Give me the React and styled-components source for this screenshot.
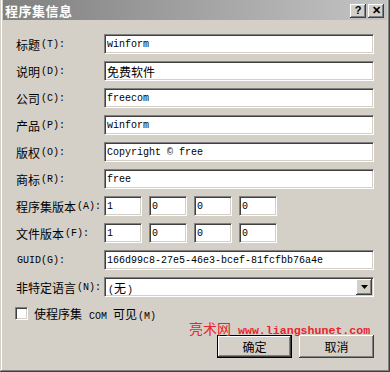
import React from "react";
import styled, { createGlobalStyle } from "styled-components";

const GlobalStyle = createGlobalStyle`
  html, body {
    margin: 0;
    padding: 0;
    background: #d4d0c8;
  }
  * {
    box-sizing: border-box;
  }
`;

const fields = [
  { label: "标题", key: "(T):", value: "winform" },
  { label: "说明", key: "(D):", value: "免费软件", cjk: true },
  { label: "公司", key: "(C):", value: "freecom" },
  { label: "产品", key: "(P):", value: "winform" },
  { label: "版权", key: "(O):", value: "Copyright © free" },
  { label: "商标", key: "(R):", value: "free" },
];

const App = () => {
  return (
    <Window>
      <GlobalStyle />
      <TitleBar>
        <TitleText>程序集信息</TitleText>
        <TitleButtons>
          <CaptionButton>?</CaptionButton>
          <CaptionButton>✕</CaptionButton>
        </TitleButtons>
      </TitleBar>

      <Form>
        {fields.map((f) => (
          <React.Fragment key={f.label}>
            <Label>
              {f.label}
              <Key>{f.key}</Key>
            </Label>
            <Field cjk={f.cjk}>{f.value}</Field>
          </React.Fragment>
        ))}

        <Label>
          程序集版本<Key>(A):</Key>
        </Label>
        <VersionRow>
          <SmallField>1</SmallField>
          <SmallField>0</SmallField>
          <SmallField>0</SmallField>
          <SmallField>0</SmallField>
        </VersionRow>

        <Label>
          文件版本<Key>(F):</Key>
        </Label>
        <VersionRow>
          <SmallField>1</SmallField>
          <SmallField>0</SmallField>
          <SmallField>0</SmallField>
          <SmallField>0</SmallField>
        </VersionRow>

        <Label>
          <Key>GUID(G):</Key>
        </Label>
        <Field>166d99c8-27e5-46e3-bcef-81fcfbb76a4e</Field>

        <Label>
          非特定语言<Key>(N):</Key>
        </Label>
        <Combo>
          <ComboText>
            <Key>(</Key>无<Key>)</Key>
          </ComboText>
          <ArrowButton>
            <svg width="7" height="4" viewBox="0 0 7 4">
              <path d="M0 0h7L3.5 4z" fill="#000" />
            </svg>
          </ArrowButton>
        </Combo>
      </Form>

      <CheckRow>
        <CheckBox />
        <CheckLabel>
          使程序集<Key> COM </Key>可见<Key>(M)</Key>
        </CheckLabel>
      </CheckRow>

      <ButtonRow>
        <Button isDefault>确定</Button>
        <Button>取消</Button>
      </ButtonRow>

      <Watermark>
        亮术网<WatermarkUrl>www.liangshunet.com</WatermarkUrl>
      </Watermark>
    </Window>
  );
};

export default App;

const Window = styled.div`
  position: relative;
  width: 390px;
  height: 372px;
  padding: 0 3px 3px 3px;
  background: #d4d0c8;
  box-shadow: inset -1px -1px #404040, inset 1px 0 #d4d0c8,
    inset -2px -2px #808080, inset 2px 0 #ffffff;
  font-family: "Noto Sans CJK SC", "Liberation Sans", sans-serif;
  font-size: 12px;
  color: #000;
`;

const TitleBar = styled.div`
  height: 20px;
  display: flex;
  align-items: center;
  justify-content: space-between;
  padding: 0 3px 0 2px;
  background: linear-gradient(to right, #808080, #c4c4c4);
`;

const TitleText = styled.div`
  color: #fff;
  font-weight: bold;
  font-size: 13px;
  letter-spacing: 0.5px;
`;

const TitleButtons = styled.div`
  display: flex;
  gap: 2px;
  margin-top: 1px;
`;

const CaptionButton = styled.div`
  width: 16px;
  height: 14px;
  display: flex;
  align-items: center;
  justify-content: center;
  background: #d4d0c8;
  box-shadow: inset -1px -1px #404040, inset 1px 1px #ffffff,
    inset -2px -2px #808080;
  font-family: "Liberation Sans", sans-serif;
  font-weight: bold;
  font-size: 11px;
  line-height: 1;
`;

const Form = styled.div`
  display: grid;
  grid-template-columns: 88px 270px;
  grid-auto-rows: 20px;
  row-gap: 7px;
  margin: 14px 0 0 13px;
`;

const Label = styled.div`
  display: flex;
  align-items: center;
  white-space: nowrap;
  font-size: 12px;
`;

const Key = styled.span`
  font-family: "Liberation Mono", monospace;
  font-size: 10px;
  white-space: pre;
  margin-left: 1px;
`;

const sunken = `
  background: #fff;
  border: 1px solid;
  border-color: #808080 #ffffff #ffffff #808080;
  box-shadow: inset 1px 1px #404040, inset -1px -1px #d4d0c8;
`;

const Field = styled.div`
  ${sunken}
  display: flex;
  align-items: center;
  padding-left: 2px;
  white-space: nowrap;
  font-family: ${(p) =>
    p.cjk ? `"Noto Sans CJK SC", sans-serif` : `"Liberation Mono", monospace`};
  font-size: ${(p) => (p.cjk ? "12px" : "10px")};
`;

const VersionRow = styled.div`
  display: flex;
  gap: 7px;
`;

const SmallField = styled(Field)`
  width: 38px;
`;

const Combo = styled.div`
  ${sunken}
  display: flex;
  align-items: center;
  justify-content: space-between;
  padding: 0 1px 0 2px;
`;

const ComboText = styled.div`
  font-size: 12px;
`;

const ArrowButton = styled.div`
  width: 16px;
  height: 16px;
  display: flex;
  align-items: center;
  justify-content: center;
  background: #d4d0c8;
  box-shadow: inset -1px -1px #404040, inset 1px 1px #ffffff,
    inset -2px -2px #808080;
`;

const CheckRow = styled.div`
  display: flex;
  align-items: center;
  gap: 6px;
  margin: 10px 0 0 12px;
  height: 13px;
`;

const CheckBox = styled.div`
  width: 13px;
  height: 13px;
  ${sunken}
`;

const CheckLabel = styled.div`
  font-size: 12px;
  white-space: nowrap;
`;

const ButtonRow = styled.div`
  display: flex;
  justify-content: flex-end;
  gap: 7px;
  margin: 15px 13px 0 0;
`;

const Button = styled.div`
  width: 75px;
  height: 23px;
  display: flex;
  align-items: center;
  justify-content: center;
  background: #d4d0c8;
  font-size: 12px;
  box-shadow: ${(p) =>
    p.isDefault
      ? "inset 0 0 0 1px #000, inset -2px -2px #404040, inset 2px 2px #ffffff, inset -3px -3px #808080"
      : "inset -1px -1px #404040, inset 1px 1px #ffffff, inset -2px -2px #808080"};
`;

const Watermark = styled.div`
  position: absolute;
  left: 189px;
  top: 318px;
  display: flex;
  align-items: baseline;
  gap: 7px;
  color: #e8252b;
  font-size: 14px;
  white-space: nowrap;
  font-family: "Noto Sans CJK SC", sans-serif;
`;

const WatermarkUrl = styled.span`
  font-family: "Liberation Mono", monospace;
  font-size: 11.6px;
  font-weight: bold;
`;
